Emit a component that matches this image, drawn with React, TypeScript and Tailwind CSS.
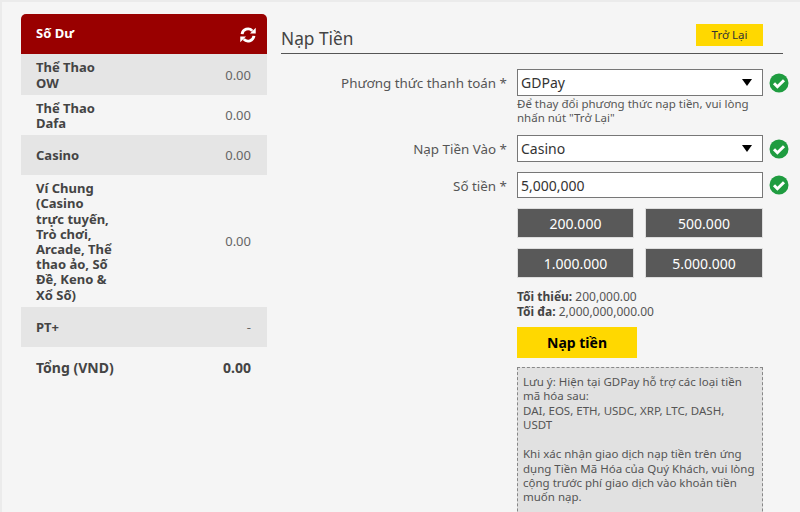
const balances = [
  { name: "Thể Thao\nOW", value: "0.00", height: "h-[41px]", shaded: true },
  { name: "Thể Thao\nDafa", value: "0.00", height: "h-[40px]", shaded: false },
  { name: "Casino", value: "0.00", height: "h-[40px]", shaded: true },
  {
    name: "Ví Chung\n(Casino\ntrực tuyến,\nTrò chơi,\nArcade, Thể\nthao ảo, Số\nĐề, Keno &\nXổ Số)",
    value: "0.00",
    height: "h-[132px]",
    shaded: false,
  },
  { name: "PT+", value: "-", height: "h-[40px]", shaded: true },
];

const amounts = ["200.000", "500.000", "1.000.000", "5.000.000"];

const CheckIcon = () => (
  <svg viewBox="0 0 20 20" className="ml-[6px] h-[20px] w-[20px] shrink-0">
    <circle cx="10" cy="10" r="9.5" fill="#1f9c40" />
    <path d="M5 10.3l3.4 3.4L15 7.2" fill="none" stroke="#fff" strokeWidth="3" />
  </svg>
);

const RefreshIcon = () => (
  <svg viewBox="0 0 20 20" className="mt-[2px] h-[18px] w-[18px]" fill="none">
    <path d="M3.4 9a6.6 6.6 0 0 1 11.4-3.6" stroke="#fff" strokeWidth="3.2" />
    <path d="M16.6 11a6.6 6.6 0 0 1-11.4 3.6" stroke="#fff" strokeWidth="3.2" />
    <path d="M18.6 2v6.4h-6.4z" fill="#fff" />
    <path d="M1.4 18v-6.4h6.4z" fill="#fff" />
  </svg>
);

const Field = ({ label, children }: { label: string; children: React.ReactNode }) => (
  <div className="flex">
    <div className="w-[236px] shrink-0 pr-[10px] pt-[4px] text-right text-[13.4px] leading-[20px] text-[#555]">
      {label}
    </div>
    {children}
  </div>
);

const SelectBox = ({ value }: { value: string }) => (
  <div className="flex h-[27px] w-[246px] items-center justify-between border border-[#777] bg-white pl-[3px] pr-[10px] text-[14px] text-[#333]">
    <span>{value}</span>
    <span className="h-0 w-0 border-x-[5px] border-t-[7px] border-x-transparent border-t-black" />
  </div>
);

export default function App() {
  return (
    <div
      className="flex h-[512px] w-[800px] gap-[14px] overflow-hidden border-l-2 border-t-2 border-[#ebebeb] bg-[#f5f5f5] pl-[19px] pt-[12px] text-[#444]"
      style={{ fontFamily: '"Noto Sans", Tahoma, sans-serif' }}
    >
      <aside className="w-[246px] shrink-0 text-[13px] leading-[15.2px]">
        <div className="flex h-[40px] items-center justify-between rounded-t-[5px] bg-[#990000] pl-[15px] pr-[10px] font-bold text-white">
          <span>Số Dư</span>
          <RefreshIcon />
        </div>
        {balances.map((row) => (
          <div
            key={row.name}
            className={`flex items-center justify-between pl-[15px] pr-[16px] pt-[2px] ${row.height} ${row.shaded ? "bg-[#e5e5e5]" : ""}`}
          >
            <span className="whitespace-pre-line font-bold">{row.name}</span>
            <span className="text-[#666]">{row.value}</span>
          </div>
        ))}
        <div className="flex h-[40px] items-center justify-between pl-[15px] pr-[16px] pt-[2px] text-[14px] font-bold">
          <span>Tổng (VND)</span>
          <span>0.00</span>
        </div>
      </aside>

      <main className="w-[502px] shrink-0">
        <div className="flex h-[40px] items-end justify-between border-b border-[#555] pr-[20px]">
          <h1 className="pb-[1px] text-[17.3px] leading-[26px] text-[#444]">Nạp Tiền</h1>
          <button className="mb-[7px] h-[22px] w-[67px] bg-[#ffd800] text-[11.5px] text-[#333]">
            Trở Lại
          </button>
        </div>

        <div className="mt-[15px]">
          <Field label="Phương thức thanh toán *">
            <div>
              <div className="flex items-center">
                <SelectBox value="GDPay" />
                <CheckIcon />
              </div>
              <p className="mt-[1px] w-[246px] text-[11.5px] leading-[14px] text-[#555]">
                Để thay đổi phương thức nạp tiền, vui lòng nhấn nút "Trở Lại"
              </p>
            </div>
          </Field>
        </div>
        <div className="mt-[10px]">
          <Field label="Nạp Tiền Vào *">
            <div className="flex items-center">
              <SelectBox value="Casino" />
              <CheckIcon />
            </div>
          </Field>
        </div>
        <div className="mt-[10px]">
          <Field label="Số tiền *">
            <div className="flex items-center">
              <div className="flex h-[26px] w-[246px] items-center border border-[#777] bg-white pl-[3px] text-[14px] text-[#333]">
                5,000,000
              </div>
              <CheckIcon />
            </div>
          </Field>
        </div>

        <div className="ml-[236px] w-[246px]">
          <div className="mt-[10px] grid grid-cols-[117px_118px] gap-x-[11px] gap-y-[10px]">
            {amounts.map((amount) => (
              <button
                key={amount}
                className="h-[30px] border border-[#ddd] bg-[#595959] text-[14px] text-white"
              >
                {amount}
              </button>
            ))}
          </div>
          <div className="mt-[11px] text-[12px] leading-[15px] text-[#555]">
            <div>
              <b className="text-[#444]">Tối thiểu:</b> 200,000.00
            </div>
            <div>
              <b className="text-[#444]">Tối đa:</b> 2,000,000,000.00
            </div>
          </div>
          <button className="mt-[8px] h-[31px] w-[120px] bg-[#ffd800] text-[14px] font-bold text-black">
            Nạp tiền
          </button>
          <div className="mt-[9px] h-[200px] border border-dashed border-[#888] bg-[#e1e1e1] px-[5px] pt-[7px] text-[11.5px] leading-[14.3px] text-[#555]">
            <p>Lưu ý: Hiện tại GDPay hỗ trợ các loại tiền mã hóa sau:</p>
            <p>
              DAI, EOS, ETH, USDC, XRP, LTC, DASH,
              <br />
              USDT
            </p>
            <p className="mt-[15.3px]">
              Khi xác nhận giao dịch nạp tiền trên ứng dụng Tiền Mã Hóa của Quý Khách, vui lòng cộng
              trước phí giao dịch vào khoản tiền muốn nạp.
            </p>
          </div>
        </div>
      </main>
    </div>
  );
}
